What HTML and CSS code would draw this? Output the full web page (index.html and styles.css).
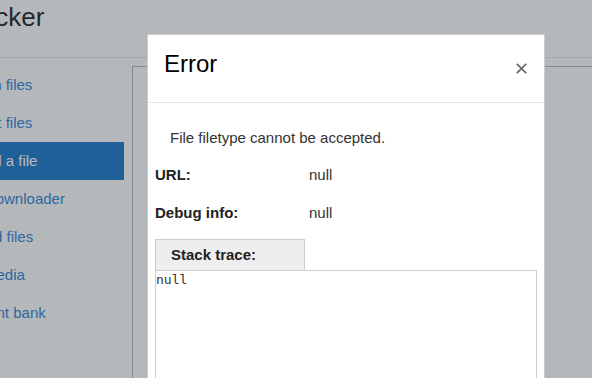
FILE: index.html
```html
<!DOCTYPE html>
<html lang="en">
<head>
  <meta charset="UTF-8" />
  <meta name="viewport" content="width=device-width, initial-scale=1" />
  <title>File picker</title>
  <link rel="stylesheet" href="styles.css">
</head>
<body>

  <div class="page">
    <header class="topbar">
      <h1>File picker</h1>
    </header>

    <div class="layout">
      <nav class="sidebar">
        <a href="#">Search files</a>
        <a href="#">Recent files</a>
        <a href="#" class="active">Upload a file</a>
        <a href="#">Bulk downloader</a>
        <a href="#">Shared files</a>
        <a href="#">Edit media</a>
        <a href="#">Element bank</a>
      </nav>
      <main class="panel"></main>
    </div>
  </div>

  <div class="backdrop"></div>

  <div class="modal">
    <div class="modal-header">
      <h2>Error</h2>
      <svg class="close" width="11" height="11" viewBox="0 0 11 11">
        <path d="M0.8 0.8 L10.2 10.2 M10.2 0.8 L0.8 10.2" stroke="#6a6a6a" stroke-width="1.7" fill="none"/>
      </svg>
    </div>
    <div class="modal-body">
      <p class="message">File filetype cannot be accepted.</p>
      <div class="row">
        <span class="label">URL:</span>
        <span class="value">null</span>
      </div>
      <div class="row">
        <span class="label">Debug info:</span>
        <span class="value">null</span>
      </div>
      <div class="tab">Stack trace:</div>
      <textarea class="trace" readonly>null</textarea>
    </div>
  </div>

</body>
</html>
```

FILE: styles.css
```css
html, body {
  margin: 0;
  height: 100%;
  overflow: hidden;
}

body {
  font-family: "Liberation Sans", Arial, sans-serif;
  background: #fff;
  color: #222;
}

.page {
  margin-left: -74px;
  height: 100%;
}

.topbar {
  padding: 2px 0 25px 0;
  border-bottom: 1px solid #e6e6e6;
  margin-bottom: 8px;
}

.topbar h1 {
  margin: 0;
  font-size: 26px;
  font-weight: normal;
  line-height: 30px;
}

.layout {
  display: flex;
  gap: 8px;
  height: 100%;
}

.sidebar {
  width: 198px;
  flex-shrink: 0;
}

.sidebar a {
  display: block;
  padding-left: 28px;
  line-height: 38px;
  font-size: 15px;
  color: #2c84d6;
  text-decoration: none;
  white-space: nowrap;
}

.sidebar a.active {
  background: #1b78c9;
  color: #fff;
}

.panel {
  flex: 1;
  border-top: 1px solid #b0b5bf;
  border-left: 1px solid #b0b5bf;
}

.backdrop {
  position: fixed;
  inset: 0;
  background: rgba(44, 52, 60, 0.35);
}

.modal {
  position: absolute;
  left: 147px;
  top: 34px;
  width: 398px;
  height: 420px;
  box-sizing: border-box;
  background: #fff;
  border: 1px solid rgba(0, 0, 0, 0.2);
  color: #333;
}

.modal-header {
  display: flex;
  justify-content: space-between;
  align-items: flex-start;
  padding: 14px 17px 24px 16px;
  border-bottom: 1px solid #e5e5e5;
}

.modal-header h2 {
  margin: 0;
  font-size: 24px;
  font-weight: normal;
  line-height: 29px;
  color: #000;
}

.close {
  margin-top: 14px;
}

.modal-body {
  padding: 25px 7px 0 7px;
  font-size: 15px;
}

.message {
  margin: 0 0 8px;
  padding-left: 15px;
  line-height: 20px;
}

.row {
  display: flex;
  line-height: 38px;
}

.label {
  width: 154px;
  font-weight: bold;
  color: #222;
}

.tab {
  margin-top: 7px;
  width: 150px;
  padding: 5px 0 5px 15px;
  box-sizing: border-box;
  line-height: 20px;
  background: #eee;
  border: 1px solid #ccc;
  border-bottom: none;
  font-weight: bold;
  color: #222;
}

.trace {
  display: block;
  width: 100%;
  height: 200px;
  box-sizing: border-box;
  margin: 0;
  padding: 1px 0;
  border: 1px solid #ccc;
  font-family: "DejaVu Sans Mono", monospace;
  font-size: 13px;
  color: #333;
  resize: none;
  outline: none;
}
```
